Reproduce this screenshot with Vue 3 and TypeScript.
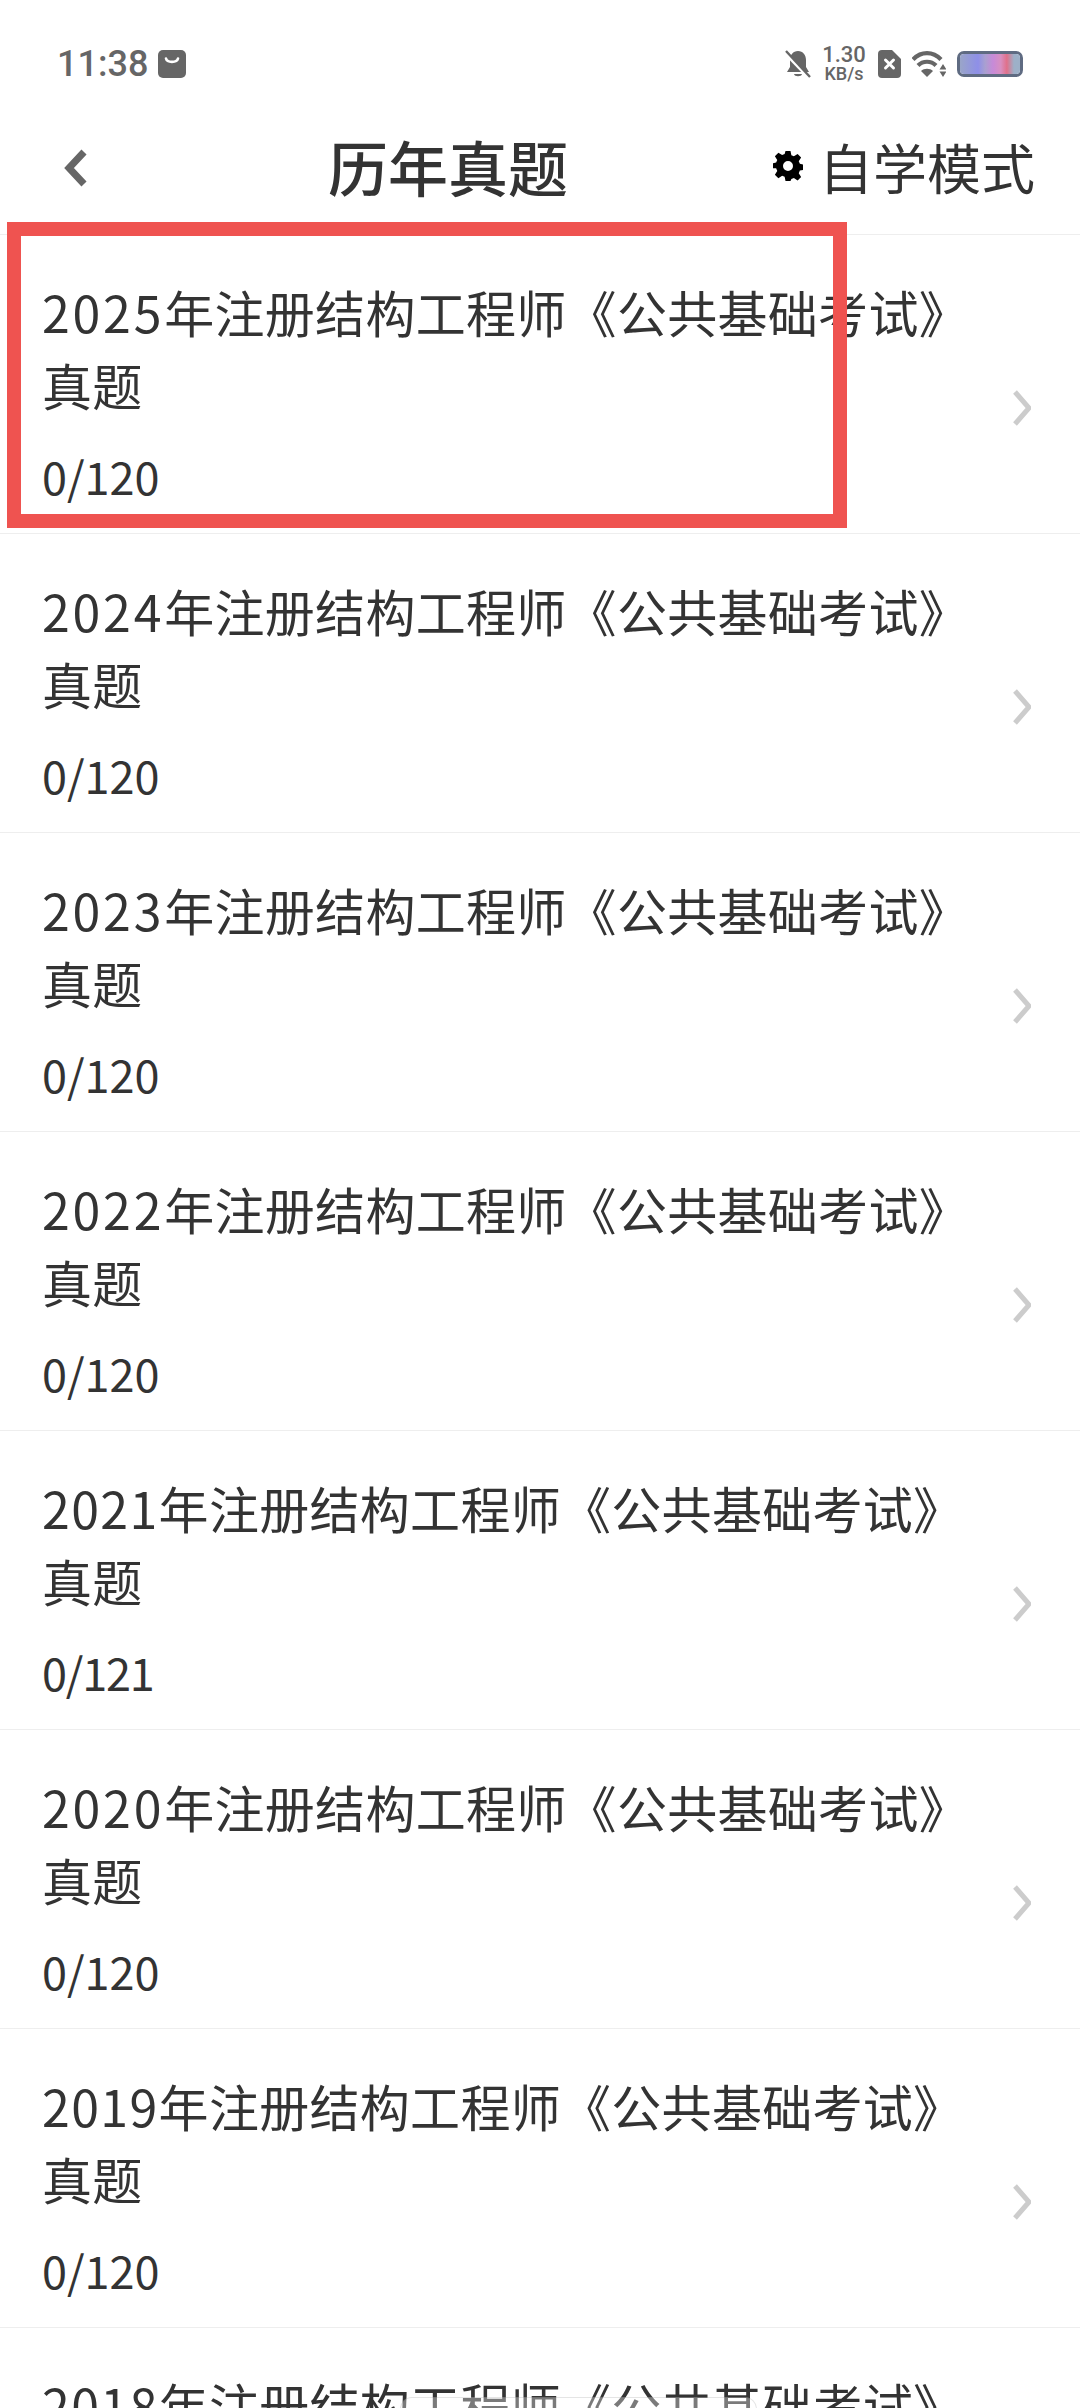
<template>
  <div class="page">
    <div class="status-bar">
      <div class="status-left">
        <span class="time">11:38</span>
        <svg class="bag" viewBox="0 0 28 28">
          <rect width="28" height="28" rx="5" fill="#666" />
          <path d="M8 8.500c1 4.500 11 4.500 12 0" fill="none" stroke="#fff" stroke-width="2.600" stroke-linecap="round" />
        </svg>
      </div>
      <div class="status-right">
        <svg class="bell" viewBox="0 0 26 28">
          <path d="M13 1c5 0 8 4 8 9v7l3 5H2l3-5v-7c0-5 3-9 8-9z" fill="#666" />
          <path d="M9 24h8c-.5 3-7.500 3-8 0z" fill="#666" />
          <path d="M0 3l24 25" stroke="#fff" stroke-width="3" />
          <path d="M1 1l24 26" stroke="#666" stroke-width="2.400" />
        </svg>
        <div class="speed">
          <span class="speed-num">1.30</span>
          <span class="speed-unit">KB/s</span>
        </div>
        <svg class="sim" viewBox="0 0 23 28">
          <path d="M4 0h10l9 9v15a4 4 0 0 1-4 4H4a4 4 0 0 1-4-4V4a4 4 0 0 1 4-4z" fill="#666" />
          <path d="M7.500 10l8 8m0-8l-8 8" stroke="#fff" stroke-width="3" stroke-linecap="round" />
        </svg>
        <svg class="wifi" viewBox="0 0 34 26">
          <path d="M1 8.500c8-8.500 20-8.500 28 0" fill="none" stroke="#666" stroke-width="4.200" />
          <path d="M6 14.500c5-5 13-5 18 0" fill="none" stroke="#666" stroke-width="4.200" />
          <path d="M15 26l-6-6c3-3 9-3 12 0z" fill="#666" />
          <path d="M31 13l3.500 5.500h-7zM31 26l-3.500-5.500h7z" fill="#666" />
        </svg>
        <div class="battery"><div class="battery-fill"></div></div>
      </div>
    </div>

    <header class="nav">
      <svg class="back" viewBox="0 0 24 38">
        <path d="M20 3L5 19l15 16" fill="none" stroke="#666" stroke-width="7" />
      </svg>
      <h1 class="nav-title">历年真题</h1>
      <div class="nav-mode">
        <svg class="gear" viewBox="0 0 24 24">
          <path
            fill="#000"
            fill-rule="evenodd"
            d="M10 0h4l.7 3.400 2 .8L19.700 2.300l2.800 2.800-1.900 3 .9 2.100 3.500.7v4l-3.500.7-.9 2.100 1.900 3-2.800 2.800-3-1.900-2 .8L14 24h-4l-.7-3.400-2-.8-3 1.900-2.800-2.800 1.900-3-.9-2.100L-1 13.900v-4l3.500-.7.9-2.100-1.900-3L4.300 1.300l3 1.900 2-.8zM12 8a4 4 0 1 0 0 8 4 4 0 0 0 0-8z"
          />
        </svg>
        <span>自学模式</span>
      </div>
    </header>

    <ul class="list">
      <li v-for="item in papers" :key="item.year" class="row">
        <div class="row-main">
          <div class="row-title">
            <span class="year" :class="{ narrow: String(item.year).includes('1') }">{{ item.year }}</span>年注册结构工程师《公共基础考试》真题
          </div>
          <div class="row-count" :class="{ narrow: item.total === 121 }">0/{{ item.total }}</div>
        </div>
        <svg class="arrow" viewBox="0 0 18 36">
          <path d="M2 2l14 16L2 34" fill="none" stroke="#ccc" stroke-width="5" />
        </svg>
      </li>
    </ul>

    <div class="highlight"></div>
    <div class="toast-edge"></div>
  </div>
</template>

<script setup lang="ts">
interface Paper {
  year: number
  total: number
}

const papers: Paper[] = [
  { year: 2025, total: 120 },
  { year: 2024, total: 120 },
  { year: 2023, total: 120 },
  { year: 2022, total: 120 },
  { year: 2021, total: 121 },
  { year: 2020, total: 120 },
  { year: 2019, total: 120 },
  { year: 2018, total: 120 }
]
</script>

<style>
html,
body {
  margin: 0;
  background: #fff;
}
</style>

<style scoped>
.page {
  position: relative;
  width: 1080px;
  height: 2408px;
  overflow: hidden;
  background: #fff;
  color: #333;
  font-family: "Noto Sans CJK SC", "Noto Sans", sans-serif;
}

.status-bar {
  height: 126px;
  box-sizing: border-box;
  padding: 46px 57px 0 57px;
  display: flex;
  justify-content: space-between;
  align-items: flex-start;
}
.status-left {
  display: flex;
  align-items: center;
  gap: 10px;
  height: 36px;
}
.time {
  font-family: Roboto, sans-serif;
  font-size: 36px;
  font-weight: 500;
  line-height: 36px;
  color: #666;
}
.bag {
  width: 28px;
  height: 28px;
}
.status-right {
  display: flex;
  align-items: center;
  height: 36px;
  color: #666;
}
.bell {
  width: 26px;
  height: 28px;
  margin-right: 12px;
}
.speed {
  width: 42px;
  margin-right: 13px;
  display: flex;
  flex-direction: column;
  align-items: center;
  font-family: Roboto, sans-serif;
  font-weight: 500;
}
.speed-num {
  font-size: 22px;
  line-height: 20px;
}
.speed-unit {
  font-size: 18px;
  line-height: 18px;
}
.sim {
  width: 23px;
  height: 28px;
  margin-right: 11px;
}
.wifi {
  width: 34px;
  height: 26px;
  margin-right: 11px;
}
.battery {
  width: 66px;
  height: 26px;
  box-sizing: border-box;
  border: 3px solid #5f6b82;
  border-radius: 7px;
  overflow: hidden;
}
.battery-fill {
  height: 100%;
  background: linear-gradient(90deg, #9aa5c8 0%, #8e8fe8 30%, #a9a0d0 42%, #c78ad8 55%, #d88fc0 68%, #e0708a 78%, #9db0c8 90%);
}

.nav {
  height: 109px;
  box-sizing: border-box;
  padding: 0 45px 24px 64px;
  display: flex;
  align-items: center;
  border-bottom: 1px solid #eee;
}
.back {
  width: 24px;
  height: 38px;
  margin-right: 240px;
  flex-shrink: 0;
}
.nav-title {
  margin: 0 0 6px;
  font-size: 60px;
  font-weight: 500;
  color: #333;
}
.nav-mode {
  margin-left: auto;
  margin-bottom: 4px;
  display: flex;
  align-items: center;
  gap: 16px;
  font-size: 54px;
}
.gear {
  width: 30px;
  height: 30px;
}

.list {
  margin: 0;
  padding: 0;
  list-style: none;
}
.row {
  height: 299px;
  box-sizing: border-box;
  padding: 40px 49px 27px 42px;
  display: flex;
  align-items: center;
  border-bottom: 1px solid #eee;
}
.row-main {
  flex: 1;
  min-width: 0;
  padding-right: 27px;
}
.row-title {
  font-size: 50px;
  line-height: 73px;
  letter-spacing: 0.3px;
}
.year {
  letter-spacing: 2.800px;
}
.year.narrow {
  letter-spacing: 1.400px;
}
.row-count {
  margin-top: 25px;
  font-size: 45px;
  line-height: 60px;
}
.row-count.narrow {
  letter-spacing: -1.200px;
}
.arrow {
  width: 18px;
  height: 36px;
  flex-shrink: 0;
  margin-top: 34px;
}

.highlight {
  position: absolute;
  left: 7px;
  top: 222px;
  width: 840px;
  height: 306px;
  box-sizing: border-box;
  border: 14px solid #ef5350;
}
.toast-edge {
  position: absolute;
  left: 400px;
  top: 2397px;
  width: 357px;
  height: 30px;
  box-sizing: border-box;
  border: 1px solid rgba(0, 0, 0, 0.1);
  border-radius: 12px;
  background: rgba(255, 255, 255, 0.35);
}
</style>
